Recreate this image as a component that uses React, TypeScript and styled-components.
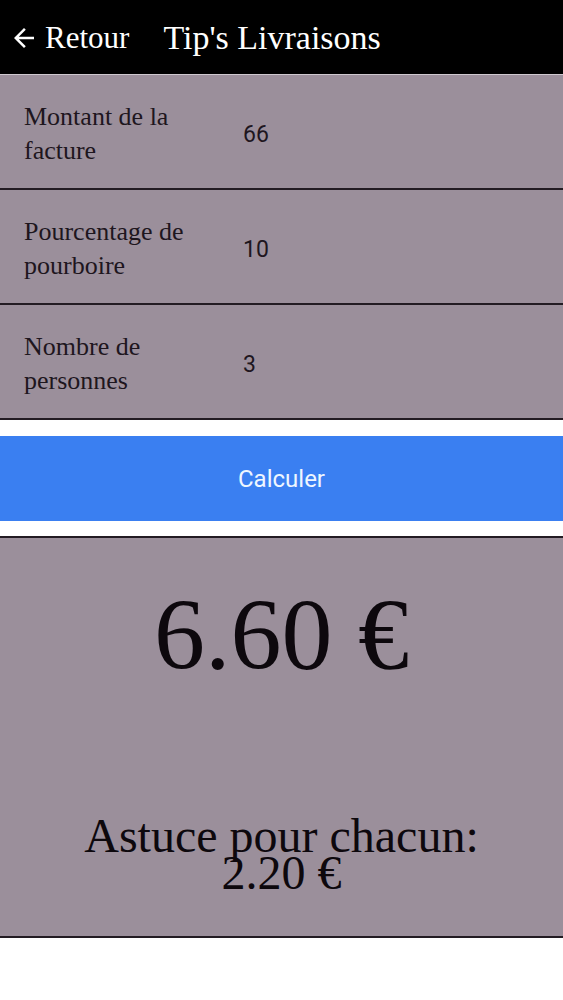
import React from 'react';
import styled, { createGlobalStyle } from 'styled-components';

const GlobalStyle = createGlobalStyle`
  html, body {
    margin: 0;
    padding: 0;
    background: #ffffff;
  }
  body {
    font-family: 'Liberation Serif', 'DejaVu Serif', serif;
  }
`;

const fields = [
  { label: 'Montant de la facture', value: '66' },
  { label: 'Pourcentage de pourboire', value: '10' },
  { label: 'Nombre de personnes', value: '3' },
];

/**
 * Back arrow.
 */
const BackArrow = () => (
  <svg width="30" height="30" viewBox="0 0 24 24" fill="#ffffff">
    <path d="M20 11H7.83l5.59-5.59L12 4l-8 8 8 8 1.41-1.41L7.83 13H20v-2z" />
  </svg>
);

export default function App() {
  return (
    <>
      <GlobalStyle />
      <Screen>
        <TopBar>
          <BackButton>
            <BackArrow />
            <span>Retour</span>
          </BackButton>
          <Title>Tip's Livraisons</Title>
        </TopBar>

        <Form>
          {fields.map((field) => (
            <FieldRow key={field.label}>
              <FieldLabel>{field.label}</FieldLabel>
              <FieldValue>{field.value}</FieldValue>
            </FieldRow>
          ))}
        </Form>

        <CalcButton>Calculer</CalcButton>

        <ResultPanel>
          <TotalTip>6.60 €</TotalTip>
          <PerPerson>
            Astuce pour chacun:
            <br />
            2.20 €
          </PerPerson>
        </ResultPanel>
      </Screen>
    </>
  );
}

const Screen = styled.div`
  display: flex;
  flex-direction: column;
  width: 563px;
  min-height: 1000px;
  background: #ffffff;
`;

const TopBar = styled.header`
  display: flex;
  align-items: center;
  gap: 34px;
  height: 74px;
  padding: 0 0 0 9px;
  background: #000000;
  border-bottom: 1px solid #cfc8cf;
  color: #ffffff;
`;

const BackButton = styled.div`
  display: flex;
  align-items: center;
  gap: 6px;
  font-size: 31px;
  padding-top: 1px;
`;

const Title = styled.h1`
  margin: 0;
  font-size: 34px;
  font-weight: 400;
  padding-top: 1px;
`;

const Form = styled.div`
  display: flex;
  flex-direction: column;
  background: #9b8f9b;
`;

const FieldRow = styled.div`
  display: grid;
  grid-template-columns: 219px 1fr;
  align-items: center;
  height: 113px;
  padding-left: 24px;
  border-bottom: 2px solid #231c23;
`;

const FieldLabel = styled.div`
  width: 185px;
  font-size: 26px;
  line-height: 34px;
  color: #1e161e;
  padding-top: 4px;
`;

const FieldValue = styled.div`
  font-family: Roboto, 'Liberation Sans', sans-serif;
  font-size: 23px;
  color: #1e161e;
  padding-top: 6px;
`;

const CalcButton = styled.button`
  display: flex;
  align-items: center;
  justify-content: center;
  height: 85px;
  margin: 16px 0 15px;
  padding: 0 0 0;
  border: none;
  background: #3a7ff1;
  color: #eef6ff;
  font-family: Roboto, 'Liberation Sans', sans-serif;
  font-size: 24px;
`;

const ResultPanel = styled.section`
  display: flex;
  flex-direction: column;
  align-items: center;
  height: 402px;
  box-sizing: border-box;
  background: #9b8f9b;
  border-top: 2px solid #231c23;
  border-bottom: 2px solid #231c23;
  color: #0d080d;
`;

const TotalTip = styled.div`
  margin-top: 46px;
  font-size: 102px;
  line-height: 102px;
`;

const PerPerson = styled.div`
  margin-top: 131px;
  font-size: 48px;
  line-height: 37px;
  text-align: center;
`;
